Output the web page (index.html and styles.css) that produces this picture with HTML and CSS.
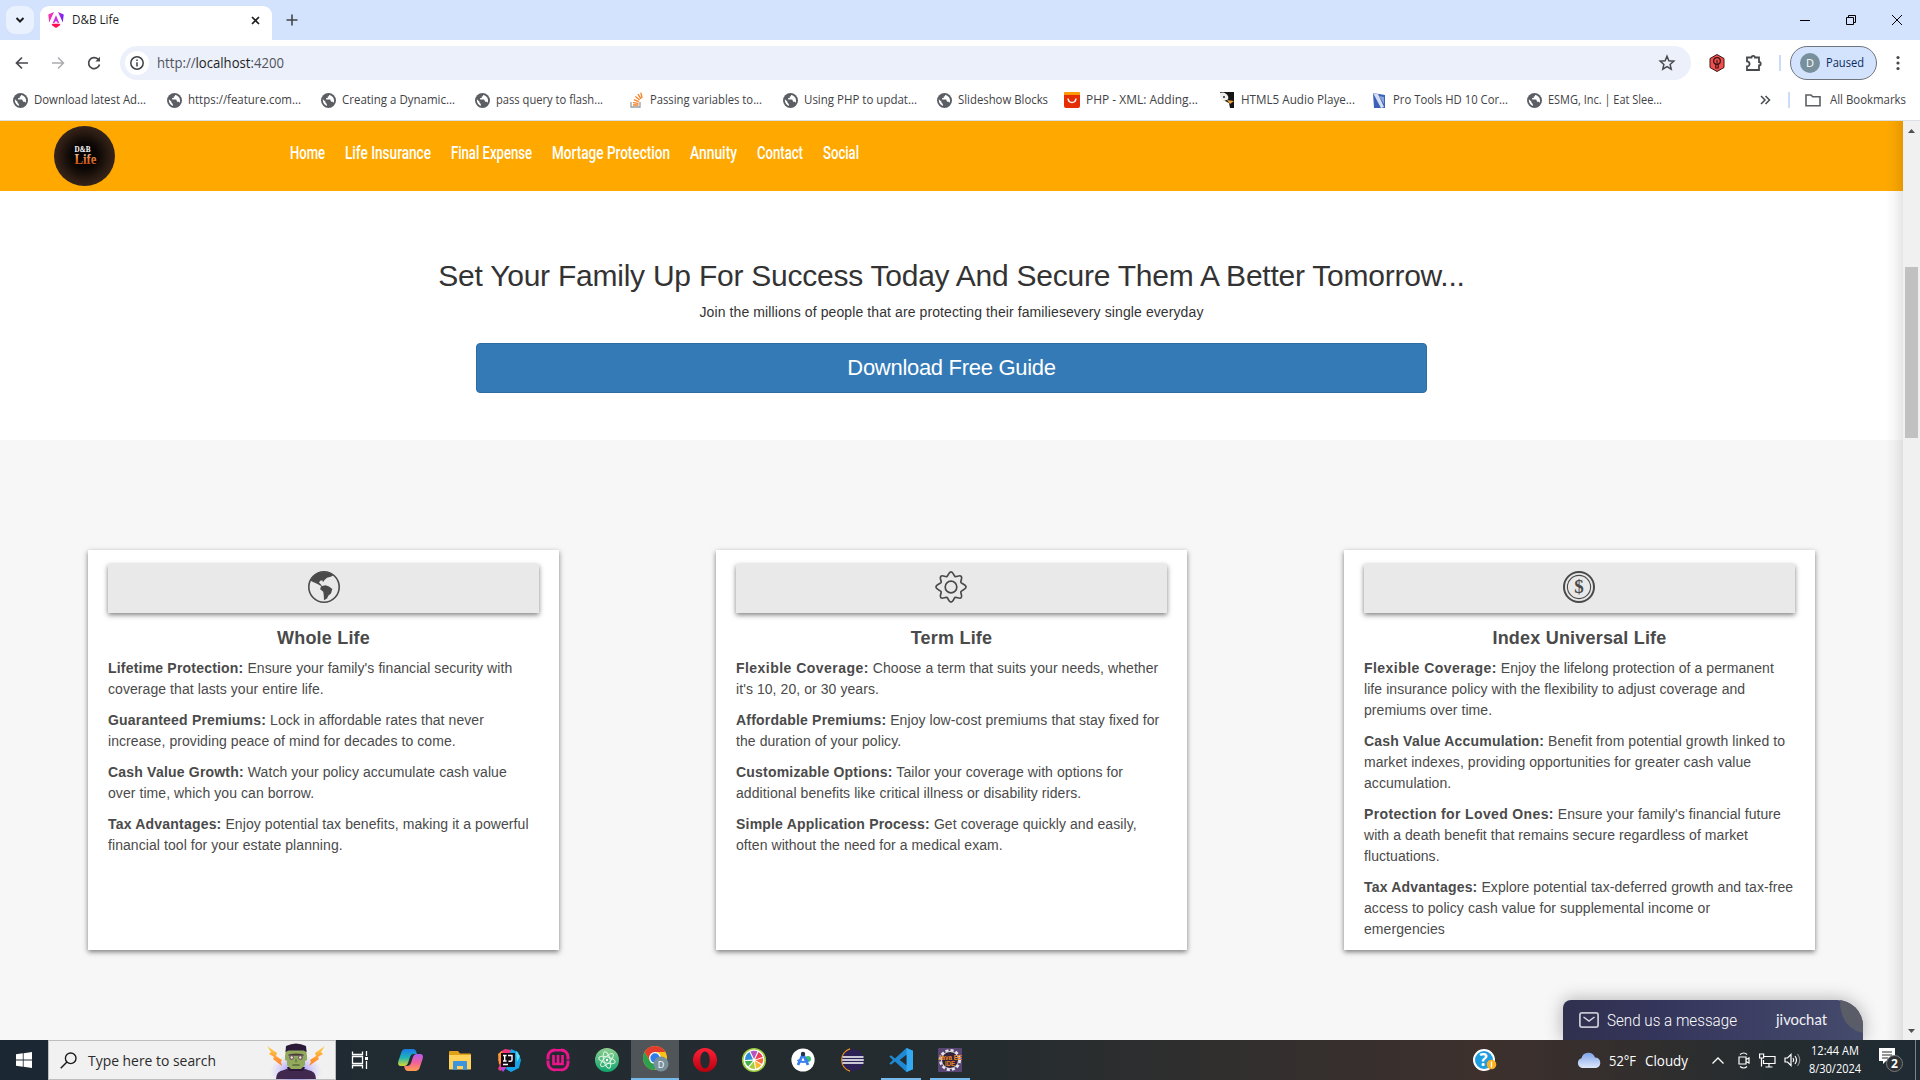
FILE: index.html
```html
<!DOCTYPE html>
<html lang="en">
<head>
<meta charset="utf-8">
<title>D&amp;B Life</title>
<link rel="stylesheet" href="styles.css">
</head>
<body>
<svg class="defs" width="0" height="0">
  <symbol id="globe" viewBox="0 0 16 16"><circle cx="8" cy="8" r="8" fill="#5b5f64"/><path d="M2 6.600 4.800 9.400v1l1.400 1.400v2C3.800 13 2 10.600 2 8zM8.500 2c.4 1.200-.6 1.500-1.300 1.800v1.500H5.500V7h4.300l1 2.300h1.700l1 1C15.200 6.500 12.500 2.500 8.500 2z" fill="#fff"/></symbol>
</svg>

<div class="tabstrip">
  <div class="tabsearch"><svg width="10" height="10" viewBox="0 0 10 10"><path d="M1.500 3 5 6.500 8.500 3" fill="none" stroke="#1f1f1f" stroke-width="2"/></svg></div>
  <div class="tab">
    <svg width="16" height="16" viewBox="0 0 16 16"><defs><linearGradient id="ng" x2="1"><stop offset="0" stop-color="#ff2fa0"/><stop offset=".55" stop-color="#d02be8"/><stop offset="1" stop-color="#6a22f0"/></linearGradient></defs><path d="M6 0 .3 2.400 1.200 10.500zM10 0l5.700 2.400-.9 8.100z" fill="url(#ng)"/><path d="M8 3.200 4.800 11h1.600l.6-1.600h2l.6 1.600h1.600z" fill="#d02be8"/><path d="M3.600 13 8 16l4.400-3-.8-1.200H4.400z" fill="#ff0f50"/></svg>
    <svg class="fit tabname" width="47" height="16"><text x="0" y="12" textLength="47" lengthAdjust="spacingAndGlyphs">D&amp;B Life</text></svg>
    <svg class="tabclose" width="9" height="9" viewBox="0 0 9 9"><path d="M1 1l7 7M8 1 1 8" stroke="#1f1f1f" stroke-width="1.700"/></svg>
  </div>
  <svg class="newtab" width="12" height="12" viewBox="0 0 12 12"><path d="M6 .5v11M.5 6h11" stroke="#444" stroke-width="1.600"/></svg>
  <div class="winctl">
    <span><svg width="10" height="10"><path d="M0 5.500h10" stroke="#000"/></svg></span>
    <span><svg width="10" height="10"><path d="M.5 2.500h7v7h-7zM2.500 2.500v-2h7v7h-2" fill="none" stroke="#000"/></svg></span>
    <span><svg width="10" height="10"><path d="M0 0l10 10M10 0 0 10" stroke="#000"/></svg></span>
  </div>
</div>

<div class="toolbar">
  <div class="tbtn"><svg width="14" height="14" viewBox="0 0 14 14"><path d="M13 7H2M7 1.500 1.500 7 7 12.500" fill="none" stroke="#47494d" stroke-width="1.700"/></svg></div>
  <div class="tbtn"><svg width="14" height="14" viewBox="0 0 14 14"><path d="M1 7h11M7 1.500 12.500 7 7 12.500" fill="none" stroke="#aaacaf" stroke-width="1.500"/></svg></div>
  <div class="tbtn"><svg width="14" height="14" viewBox="0 0 14 14"><path d="M12.500 8.500A5.500 5.500 0 1 1 11 3.200l1.300 1.300" fill="none" stroke="#47494d" stroke-width="1.700"/><path d="M13 .8V5.500H8.300z" fill="#47494d"/></svg></div>
  <div class="omnibox">
    <div class="info"><svg width="14" height="14" viewBox="0 0 14 14"><circle cx="7" cy="7" r="6.200" fill="none" stroke="#3c4043" stroke-width="1.500"/><path d="M7 6.200v4.300M7 3.500V5" stroke="#3c4043" stroke-width="1.500"/></svg></div>
    <svg class="fit url" width="130" height="20"><text x="0" y="15" textLength="127" lengthAdjust="spacingAndGlyphs"><tspan>http://</tspan><tspan class="host">localhost</tspan><tspan>:4200</tspan></text></svg>
    <svg class="star" width="16" height="16" viewBox="0 0 16 16"><path d="M8 1.300l1.900 4.500 4.900.4-3.700 3.200 1.100 4.800L8 11.600l-4.200 2.600 1.100-4.800L1.200 6.200l4.900-.4z" fill="none" stroke="#47494d" stroke-width="1.500"/></svg>
  </div>
  <div class="tbtn"><svg width="16" height="18" viewBox="0 0 16 18"><path d="M8 .5l7 4v9l-7 4-7-4v-9z" fill="#f24e4e" stroke="#3a1717"/><circle cx="8" cy="7" r="3.300" fill="none" stroke="#3a1717" stroke-width="1.300"/><path d="M6.800 10h2.400v4H6.800zM8 6v3" fill="none" stroke="#3a1717" stroke-width="1.200"/></svg></div>
  <div class="tbtn puzzle"><svg width="18" height="18" viewBox="0 0 18 18"><path d="M2 3.500h4.500a1.700 1.700 0 0 1 3.400 0H14V8a1.700 1.700 0 0 1 0 3.400V16H2v-3.500c3.400 0 3.400-5.200 0-5.200z" fill="none" stroke="#47494d" stroke-width="1.800"/></svg></div>
  <i class="sep"></i>
  <div class="profile"><b>D</b><svg class="fit" width="38" height="16"><text x="0" y="12" textLength="38" lengthAdjust="spacingAndGlyphs">Paused</text></svg></div>
  <div class="tbtn dots"><svg width="4" height="16"><circle cx="2" cy="2.500" r="1.600"/><circle cx="2" cy="8" r="1.600"/><circle cx="2" cy="13.500" r="1.600"/></svg></div>
</div>

<div class="bookmarks">
  <div class="bm"><svg width="15" height="15"><use href="#globe"/></svg><svg class="fit" width="112" height="16"><text x="0" y="12" textLength="112" lengthAdjust="spacingAndGlyphs">Download latest Ad...</text></svg></div>
  <div class="bm"><svg width="15" height="15"><use href="#globe"/></svg><svg class="fit" width="112" height="16"><text x="0" y="12" textLength="113" lengthAdjust="spacingAndGlyphs">https://feature.com...</text></svg></div>
  <div class="bm"><svg width="15" height="15"><use href="#globe"/></svg><svg class="fit" width="112" height="16"><text x="0" y="12" textLength="113" lengthAdjust="spacingAndGlyphs">Creating a Dynamic...</text></svg></div>
  <div class="bm"><svg width="15" height="15"><use href="#globe"/></svg><svg class="fit" width="112" height="16"><text x="0" y="12" textLength="107" lengthAdjust="spacingAndGlyphs">pass query to flash...</text></svg></div>
  <div class="bm"><svg width="15" height="16" viewBox="0 0 15 16"><path d="M2 10v5h9v-5" fill="none" stroke="#9a9da0" stroke-width="1.300"/><path d="M4 13h5.500M4 10.600l5.500.7M4.800 7.700l5 1.900M6.400 4.600l4.300 3.500M9 2.200l3 4.700M11.800.6l1.300 5.600" stroke="#f48024" stroke-width="1.300"/></svg><svg class="fit" width="112" height="16"><text x="0" y="12" textLength="112" lengthAdjust="spacingAndGlyphs">Passing variables to...</text></svg></div>
  <div class="bm"><svg width="15" height="15"><use href="#globe"/></svg><svg class="fit" width="112" height="16"><text x="0" y="12" textLength="113" lengthAdjust="spacingAndGlyphs">Using PHP to updat...</text></svg></div>
  <div class="bm"><svg width="15" height="15"><use href="#globe"/></svg><svg class="fit" width="90" height="16"><text x="0" y="12" textLength="90" lengthAdjust="spacingAndGlyphs">Slideshow Blocks</text></svg></div>
  <div class="bm tight"><svg width="16" height="16"><rect width="16" height="16" rx="2" fill="#e62e04"/><path d="M0 2q0-2 2-2h12q2 0 2 2v1H0z" fill="#ff9a00"/><path d="M4 6.500q.6 4 4 4t4-4" fill="none" stroke="#fff" stroke-width="1.500"/></svg><svg class="fit" width="112" height="16"><text x="0" y="12" textLength="112" lengthAdjust="spacingAndGlyphs">PHP - XML: Adding...</text></svg></div>
  <div class="bm"><svg width="16" height="16"><path d="M1 0h14v16h-4l-1-5-4-2-3-4z" fill="#151515"/><path d="M1 1q5-2 8 3 1 3-1 4L4 9 1 5z" fill="#eee"/><circle cx="5" cy="5" r="1" fill="#222"/><path d="M8 8l7 1-4 3z" fill="#f2a33a"/></svg><svg class="fit" width="114" height="16"><text x="0" y="12" textLength="114" lengthAdjust="spacingAndGlyphs">HTML5 Audio Playe...</text></svg></div>
  <div class="bm near"><svg width="15" height="16"><path d="M1 1l12 2v13H2z" fill="#3c62b8"/><path d="M1 1l5 1 6 13-3 1z" fill="#d5def4"/><path d="M7 4l5 1v7z" fill="#8ba3dc"/></svg><svg class="fit" width="115" height="16"><text x="0" y="12" textLength="115" lengthAdjust="spacingAndGlyphs">Pro Tools HD 10 Cor...</text></svg></div>
  <div class="bm last"><svg width="15" height="15"><use href="#globe"/></svg><svg class="fit" width="114" height="16"><text x="0" y="12" textLength="114" lengthAdjust="spacingAndGlyphs">ESMG, Inc. | Eat Slee...</text></svg></div>
  <div class="bmright">
    <svg width="10" height="10" viewBox="0 0 10 10"><path d="M1 1l4 4-4 4M5.500 1l4 4-4 4" fill="none" stroke="#47494d" stroke-width="1.500"/></svg>
    <i class="sep"></i>
    <svg width="16" height="13" viewBox="0 0 16 13"><path d="M1 11.800V1h5l1.700 1.800H15v9z" fill="none" stroke="#5b5f64" stroke-width="1.600"/></svg>
    <svg class="fit" width="76" height="16"><text x="0" y="12" textLength="76" lengthAdjust="spacingAndGlyphs">All Bookmarks</text></svg>
  </div>
</div>

<div class="viewport">
  <main class="page">
    <header class="sitenav">
      <svg class="logo" width="62" height="60" viewBox="0 0 62 60"><defs><radialGradient id="lg"><stop offset="0" stop-color="#000"/><stop offset=".45" stop-color="#0c0705"/><stop offset=".8" stop-color="#2a1b12"/><stop offset="1" stop-color="#35241a"/></radialGradient><linearGradient id="lt" x2="0" y2="1"><stop offset="0" stop-color="#f4e3cf"/><stop offset=".5" stop-color="#e8762a"/><stop offset="1" stop-color="#b33d10"/></linearGradient></defs><ellipse cx="30.500" cy="30" rx="30.500" ry="30" fill="url(#lg)"/><text x="20.500" y="26" class="logo1" textLength="16" lengthAdjust="spacingAndGlyphs">D&amp;B</text><text x="20.500" y="37.500" class="logo2" fill="url(#lt)" textLength="22" lengthAdjust="spacingAndGlyphs">Life</text></svg>
      <nav>
        <svg width="35" height="24"><text x="0" y="18" textLength="35" lengthAdjust="spacingAndGlyphs">Home</text></svg>
        <svg width="86" height="24"><text x="0" y="18" textLength="86" lengthAdjust="spacingAndGlyphs">Life Insurance</text></svg>
        <svg width="81" height="24"><text x="0" y="18" textLength="81" lengthAdjust="spacingAndGlyphs">Final Expense</text></svg>
        <svg width="118" height="24"><text x="0" y="18" textLength="118" lengthAdjust="spacingAndGlyphs">Mortage Protection</text></svg>
        <svg width="47" height="24"><text x="0" y="18" textLength="47" lengthAdjust="spacingAndGlyphs">Annuity</text></svg>
        <svg width="46" height="24"><text x="0" y="18" textLength="46" lengthAdjust="spacingAndGlyphs">Contact</text></svg>
        <svg width="36" height="24"><text x="0" y="18" textLength="36" lengthAdjust="spacingAndGlyphs">Social</text></svg>
      </nav>
    </header>
    <section class="hero">
      <h2>Set Your Family Up For Success Today And Secure Them A Better Tomorrow...</h2>
      <p>Join the millions of people that are protecting their familiesevery single everyday</p>
      <a class="btn">Download Free Guide</a>
    </section>
    <section class="plans">
      <article class="card">
        <div class="cardicon"><svg width="32" height="32" viewBox="0 0 32 32"><circle cx="16" cy="16" r="15.200" fill="none" stroke="#4a4a4a" stroke-width="1.600"/><path d="M2.500 9.500C5 4 10 1 16 1c4 0 7 1.200 9.500 3.200l-2.800 1.600-3.700 1-2.500 2.200-1.500 2.300-.5-1.800h-2l-1.500 2 1.500 1.500 1.500 1.800h-1.500L9.500 13 4 10.500z" fill="#4a4a4a"/><path d="M13 15.200l4.500-.9 3.500 1.200 3.300 2.500-1.300 4.500-2.500 2-1.500 3-3 1.700-.3-5.500-.5-3-3-2.500z" fill="#4a4a4a"/></svg></div>
        <h3>Whole Life</h3>
        <p><b>Lifetime Protection:</b> Ensure your family's financial security with<br>coverage that lasts your entire life.</p>
        <p><b>Guaranteed Premiums:</b> Lock in affordable rates that never<br>increase, providing peace of mind for decades to come.</p>
        <p><b>Cash Value Growth:</b> Watch your policy accumulate cash value<br>over time, which you can borrow.</p>
        <p><b>Tax Advantages:</b> Enjoy potential tax benefits, making it a powerful<br>financial tool for your estate planning.</p>
      </article>
      <article class="card">
        <div class="cardicon"><svg width="32" height="32" viewBox="0 0 32 32" fill="none" stroke="#4a4a4a" stroke-width="1.700"><circle cx="16" cy="16" r="5.800"/><path d="M16 .9c2.300 0 2.600 4 4.200 4.700 1.600.6 4.300-2 6-.3s-.9 4.400-.3 6c.7 1.600 5.200 2.400 5.200 4.700s-4.500 3.100-5.200 4.700c-.6 1.600 2 4.300.3 6s-4.400-.9-6-.3c-1.600.7-1.900 4.700-4.200 4.700s-2.600-4-4.200-4.700c-1.600-.6-4.300 2-6 .3s.9-4.400.3-6C5.400 19.100.9 18.300.9 16s4.500-3.100 5.200-4.700c.6-1.600-2-4.300-.3-6s4.400.9 6 .3C13.400 4.900 13.700.9 16 .9z"/></svg></div>
        <h3>Term Life</h3>
        <p><b class="wide">Flexible Coverage:</b> Choose a term that suits your needs, whether<br>it's 10, 20, or 30 years.</p>
        <p><b>Affordable Premiums:</b> Enjoy low-cost premiums that stay fixed for<br>the duration of your policy.</p>
        <p><b>Customizable Options:</b> Tailor your coverage with options for<br>additional benefits like critical illness or disability riders.</p>
        <p><b>Simple Application Process:</b> Get coverage quickly and easily,<br>often without the need for a medical exam.</p>
      </article>
      <article class="card">
        <div class="cardicon"><svg width="32" height="32" viewBox="0 0 32 32"><circle cx="16" cy="16" r="15" fill="none" stroke="#4a4a4a" stroke-width="2"/><circle cx="16" cy="16" r="11.600" fill="none" stroke="#4a4a4a" stroke-width="1.100"/><text x="16" y="22" text-anchor="middle" class="dollar">$</text></svg></div>
        <h3>Index Universal Life</h3>
        <p><b class="wide">Flexible Coverage:</b> Enjoy the lifelong protection of a permanent<br>life insurance policy with the flexibility to adjust coverage and<br>premiums over time.</p>
        <p><b>Cash Value Accumulation:</b> Benefit from potential growth linked to<br>market indexes, providing opportunities for greater cash value<br>accumulation.</p>
        <p><b class="mid">Protection for Loved Ones:</b> Ensure your family's financial future<br>with a death benefit that remains secure regardless of market<br>fluctuations.</p>
        <p><b>Tax Advantages:</b> Explore potential tax-deferred growth and tax-free<br>access to policy cash value for supplemental income or<br>emergencies</p>
      </article>
    </section>
    <div class="edgeshade"></div>
    <div class="chat">
      <svg width="20" height="16" viewBox="0 0 20 16"><rect x=".9" y=".9" width="18.200" height="14.200" rx="2" fill="none" stroke="#c3c6cc" stroke-width="1.800"/><path d="M4.500 5l5.500 4 5.500-4" fill="none" stroke="#d5d8dc" stroke-width="1.500"/></svg>
      <svg class="send" width="131" height="24"><text x="0" y="17.500" textLength="130" lengthAdjust="spacingAndGlyphs">Send us a message</text></svg>
      <svg class="jivo" width="52" height="24"><text x="0" y="16.500" textLength="51" lengthAdjust="spacingAndGlyphs">jivochat</text></svg>
      <svg class="leaf" width="23" height="33"><path d="M0 0h23v33Q0 28 0 0z" fill="#5a5c68"/></svg>
    </div>
  </main>
  <div class="scrollbar">
    <svg width="7" height="4"><path d="M0 4 3.500 0 7 4z" fill="#505050"/></svg>
    <div class="thumb"></div>
    <svg class="down" width="7" height="4"><path d="M0 0 3.500 4 7 0z" fill="#505050"/></svg>
  </div>
</div>

<footer class="taskbar">
  <div class="start"><svg width="16" height="16"><path d="M0 2.300 6.800 1.300v6.300H0zM7.600 1.200 16 0v7.600H7.600zM0 8.400h6.800v6.300L0 13.700zM7.600 8.400H16V16l-8.400-1.200z" fill="#fff"/></svg></div>
  <div class="search">
    <svg width="17" height="17" viewBox="0 0 17 17"><circle cx="10.700" cy="6.300" r="5.300" fill="none" stroke="#1d1d1d" stroke-width="1.400"/><path d="M7 10 .7 16.300" stroke="#1d1d1d" stroke-width="1.500"/></svg>
    <svg class="fit query" width="130" height="22"><text x="0" y="17" textLength="128" lengthAdjust="spacingAndGlyphs">Type here to search</text></svg>
    <svg class="frank" width="60" height="36" viewBox="0 0 60 36"><defs><linearGradient id="bolt" x2="0" y2="1"><stop offset="0" stop-color="#ffd24a"/><stop offset="1" stop-color="#ff7a2a"/></linearGradient><radialGradient id="glow"><stop offset=".4" stop-color="#9a8cff" stop-opacity=".6"/><stop offset="1" stop-color="#b8b0ff" stop-opacity="0"/></radialGradient></defs><ellipse cx="30" cy="28" rx="26" ry="17" fill="url(#glow)"/><path d="M1 3l10 7-1 3 6 4-1 2 1 4-9-7 1-2-5-3 2-2zM59 3 49 10l1 3-6 4 1 2-2 4 10-7-1-2 5-3-2-2z" fill="url(#bolt)"/><path d="M10 36q0-8 8-9l7-3h9l8 3q8 1 8 9z" fill="#41284f"/><path d="M21 24h18l-2 4H23z" fill="#2b1839"/><path d="M20 6q10-5 20 0l1 7v4l-2 1v4l-4 4H25l-4-4v-4l-2-1v-4z" fill="#93aa5c"/><path d="M19.500 9 20 3q10-5 20 0l.6 6-3-1.500H22.500z" fill="#2c1b38"/><path d="M22.500 11.500q7.500-2 15 0v1.200h-15z" fill="#4a4038"/><circle cx="25.500" cy="14.500" r="2.400" fill="#6d5575"/><circle cx="34.500" cy="14.500" r="2.400" fill="#6d5575"/><circle cx="25.700" cy="14.500" r="1.200" fill="#f2e9c9"/><circle cx="34.300" cy="14.500" r="1.200" fill="#f2e9c9"/><path d="M30 14l-1.500 5h3z" fill="#6a8a45"/><path d="M26.500 22h7" stroke="#4a5a30" stroke-width="1.200"/></svg>
  </div>
  <div class="app view"><svg width="18" height="18" fill="none" stroke="#fff" stroke-width="1.300"><path d="M1.500.5v3h10v-3M1.500 17.500v-3h10v3M1.500 5.500h10v7h-10zM15.500 0v5M15.500 10v8"/><rect x="14" y="6" width="3" height="3" fill="#fff" stroke="none"/></svg></div>
  <div class="app"><svg width="25" height="22" viewBox="0 0 25 22"><defs><linearGradient id="c1" x2="0" y2="1"><stop offset="0" stop-color="#1c78e8"/><stop offset=".5" stop-color="#1db3b8"/><stop offset="1" stop-color="#d8d92f"/></linearGradient><linearGradient id="c2" x2="0" y2="1"><stop offset="0" stop-color="#b45cf0"/><stop offset=".5" stop-color="#f0609a"/><stop offset="1" stop-color="#ffa04a"/></linearGradient></defs><path d="M7 0h8q3 0 3.600 4l.4 1h-4q-2 0-3 3l-2 6q-1 3-4 3H3q-4 0-2.600-5l3-9Q4.500 0 7 0z" fill="url(#c1)"/><path d="M18 22h-8q-3 0-3.600-4L6 17h3q3 0 4-3l2-6q1-3 4-3h3q4 0 2.600 5l-3 9Q20.500 22 18 22z" fill="url(#c2)"/></svg></div>
  <div class="app"><svg width="22" height="19" viewBox="0 0 22 19"><path d="M0 1q0-1 1-1h8l2 2.500h10q1 0 1 1V18H0z" fill="#e0a11b"/><path d="M0 4h22v14q0 .5-1 .5H1q-1 0-1-.5z" fill="#ffd25c"/><path d="M4 19v-8q0-1 1-1h12q1 0 1 1v8h-4v-4H8v4z" fill="#3d94dc"/></svg></div>
  <div class="app"><svg width="24" height="24" viewBox="0 0 24 24"><path d="M3 4 8 1l6 1 2 3L9 20l-6 3-2-2 2-5-2-4z" fill="#f0387c"/><path d="M1 6l4-3 2 8-5 6z" fill="#ff9b2e"/><path d="M14 1l7 3 3 8-2 8-8 4-5-3z" fill="#14a5e8"/><path d="M19 3l4 5-3 6z" fill="#5de0f5"/><path d="M3 19l6 1-3 4z" fill="#a64be8"/><path d="M4 5h14v14H4z" fill="#140c14"/><path d="M6 7.500h3.500M6 13h3.500M7.700 7.500V13M11 7.500h4V12q0 1.200-1.500 1.200h-2M6 16.500h5" stroke="#fff" stroke-width="1.400" fill="none"/></svg></div>
  <div class="app"><svg width="24" height="24" viewBox="0 0 24 24"><rect x="2" y="2" width="20" height="20" rx="7" fill="none" stroke="#ea148c" stroke-width="3"/><path d="M0 12h4M20 12h4M9 .5h6M9 23.500h6" stroke="#222b31" stroke-width="1"/><path d="M7.500 7v9h9V7M12 7v8" fill="none" stroke="#ea148c" stroke-width="2.700"/></svg></div>
  <div class="app"><svg width="24" height="24" viewBox="0 0 24 24"><defs><linearGradient id="at" x2="0" y2="1"><stop offset="0" stop-color="#8fcf8f"/><stop offset="1" stop-color="#0fa56c"/></linearGradient></defs><circle cx="12" cy="12" r="12" fill="url(#at)"/><g fill="none" stroke="#dff5e6" stroke-width="1"><ellipse cx="12" cy="12" rx="8.500" ry="3.200" transform="rotate(15 12 12)"/><ellipse cx="12" cy="12" rx="8.500" ry="3.200" transform="rotate(75 12 12)"/><ellipse cx="12" cy="12" rx="8.500" ry="3.200" transform="rotate(135 12 12)"/></g><circle cx="12" cy="12" r="1.200" fill="#fff"/></svg></div>
  <div class="app active"><svg width="26" height="26" viewBox="0 0 26 26"><circle cx="12" cy="12" r="12" fill="#fbc116"/><path d="M12 6h10.400A12 12 0 0 0 1.600 6l5.200 9z" fill="#e33b2e"/><path d="M1.600 6A12 12 0 0 0 12 24l5.200-9H6.800z" fill="#2da04e"/><circle cx="12" cy="12" r="6" fill="#fff"/><circle cx="12" cy="12" r="4.700" fill="#2f7de9"/><circle cx="18" cy="18" r="7.500" fill="#78909c"/><text x="18" y="21.500" text-anchor="middle" class="cd">D</text></svg></div>
  <div class="app"><svg width="24" height="24" viewBox="0 0 24 24"><defs><linearGradient id="op" x2="0" y2="1"><stop offset="0" stop-color="#ff2136"/><stop offset="1" stop-color="#b8000f"/></linearGradient></defs><path fill-rule="evenodd" d="M12 0a12 12 0 1 0 0 24 12 12 0 1 0 0-24zm0 3.500c3 0 4.700 4 4.700 8.500s-1.700 8.500-4.700 8.500S7.300 16.500 7.300 12 9 3.500 12 3.500z" fill="url(#op)"/></svg></div>
  <div class="app"><svg width="24" height="24" viewBox="0 0 24 24"><circle cx="12" cy="12" r="11.300" fill="#fff" stroke="#9ccc3c" stroke-width="1.600"/><g><path d="M12 11 8.500 3.500a9 9 0 0 1 7 0z" fill="#b455c0"/><path d="M13 11.500 16.500 4a9 9 0 0 1 4.300 5z" fill="#ef3e5c"/><path d="M13.500 12.300 21 10a9 9 0 0 1-1 6z" fill="#f7693b"/><path d="M13 13l6.500 4a9 9 0 0 1-5.500 3.800z" fill="#fbb62b"/><path d="M12 13.500l1 7.500a9 9 0 0 1-6-1.700z" fill="#a4ce39"/><path d="M11 12.800l-4.800 5.700A9 9 0 0 1 3 13z" fill="#40b04a"/><path d="M11 11.500 3 12a9 9 0 0 1 4.500-8z" fill="#2c8fd8"/></g></svg></div>
  <div class="app"><svg width="24" height="24" viewBox="0 0 24 24"><circle cx="12" cy="12" r="11.600" fill="#fff"/><circle cx="17" cy="11" r="3" fill="#3ac26b"/><path d="M12 6 7 17M12 6l5 11" stroke="#3a7ff0" stroke-width="2.800"/><path d="M6.500 12q5.500 4 11 0" fill="none" stroke="#3a7ff0" stroke-width="2"/><circle cx="12" cy="6" r="2.200" fill="#20354f"/></svg></div>
  <div class="app"><svg width="25" height="24" viewBox="0 0 25 24"><path d="M11 1A11.500 11.500 0 0 0 11 23 12.500 12.500 0 0 1 11 1z" fill="#f7941e" stroke="#f7941e" stroke-width="1.500"/><circle cx="14" cy="12" r="10.800" fill="#2c2255"/><path d="M3.500 9h21M3.200 12h21.600M3.500 15h21" stroke="#fff" stroke-width="1.600"/></svg></div>
  <div class="app running"><svg width="24" height="24" viewBox="0 0 24 24"><path d="M17.500 0 24 2.700v18.600L17.500 24 6 13.500 2 16.800.3 15.500 4 12 .3 8.500 2 7.200 6 10.500z" fill="#1f8ad2"/><path d="M17.500 0 24 2.700v18.600L17.500 24z" fill="#32a9f0"/><path d="M17.500 6.800v10.400L10.700 12z" fill="#232c30"/></svg></div>
  <div class="app running"><svg width="24" height="24" viewBox="0 0 24 24"><rect width="24" height="24" rx="1" fill="#5a4675"/><circle cx="12" cy="12" r="9.500" fill="none" stroke="#e8e4ea" stroke-width="3" stroke-dasharray="3 2"/><circle cx="12" cy="12" r="8.500" fill="#30233a" stroke="#ddd"/><text x="0" y="11.500" class="jee" textLength="24" lengthAdjust="spacingAndGlyphs">Java EE</text><text x="7" y="18" class="jee" textLength="10" lengthAdjust="spacingAndGlyphs">IDE</text></svg></div>
  <div class="tray">
    <svg class="help" width="24" height="22" viewBox="0 0 24 22"><circle cx="11" cy="11" r="10" fill="#1e9de0" stroke="#fff" stroke-width="2"/><text x="10.500" y="17" text-anchor="middle" class="qm">?</text><circle cx="18.500" cy="15.500" r="4.800" fill="#f9b122"/><path d="M18.500 12.500v6" stroke="#fff" stroke-width="1.300"/></svg>
    <svg class="cloud" width="24" height="16" viewBox="0 0 24 16"><defs><linearGradient id="cl" x2="0" y2="1"><stop offset="0" stop-color="#7ea2ea"/><stop offset="1" stop-color="#dfe9fb"/></linearGradient></defs><path d="M5 16a5 5 0 0 1-.5-9.700A7 7 0 0 1 18 5.500 5.300 5.300 0 0 1 19 16z" fill="url(#cl)"/></svg>
    <svg class="wtext w1" width="27" height="20"><text x="0" y="15.500" textLength="27" lengthAdjust="spacingAndGlyphs">52°F</text></svg>
    <svg class="wtext w2" width="44" height="20"><text x="0" y="15.500" textLength="43" lengthAdjust="spacingAndGlyphs">Cloudy</text></svg>
    <svg class="chev" width="12" height="7"><path d="M.5 6.500 6 1l5.500 5.500" fill="none" stroke="#fff" stroke-width="1.300"/></svg>
    <svg class="ti" width="12" height="17" viewBox="0 0 12 17" fill="none" stroke="#fff" stroke-width="1.200"><path d="M2 2.500q4-3 7 0M2 14.500q4 3 7 0M1 5h7v7H1zM8 7.500l3-1.500v5L8 9.500"/></svg>
    <svg class="ti net" width="17" height="15" viewBox="0 0 17 15" fill="none" stroke="#fff" stroke-width="1.200"><path d="M5 3.500h11v7H4.500V7M10 10.500v3M6.500 14h7M.6 1h4v4h-4zM2.500 5v8.500"/></svg>
    <svg class="ti" width="17" height="14" viewBox="0 0 17 14" fill="none" stroke="#fff" stroke-width="1.200"><path d="M1 5h2.500L7 1.500v11L3.500 9H1zM9 5q1.500 2 0 4"/><path d="M11 3q3 4 0 8" /><path d="M13.500 1q4.500 6 0 12" stroke="#8a8a8a"/></svg>
    <div class="clock">
      <svg width="50" height="18"><text x="1" y="13" textLength="48" lengthAdjust="spacingAndGlyphs">12:44 AM</text></svg>
      <svg width="54" height="18"><text x="1" y="13" textLength="52" lengthAdjust="spacingAndGlyphs">8/30/2024</text></svg>
    </div>
    <svg class="note" width="26" height="26" viewBox="0 0 26 26"><path d="M1 1h16v13H8l-3 3v-3H1z" fill="#fff"/><path d="M4 5h10M4 8h10M4 11h6" stroke="#2a2a2a" stroke-width="1.200"/><circle cx="16.500" cy="16.500" r="8" fill="#2e3133" stroke="#7b7b7b"/><text x="16.500" y="21" text-anchor="middle" class="n2">2</text></svg>
    <i class="peek"></i>
  </div>
</footer>
</body>
</html>
```
FILE: styles.css
```css
* { box-sizing: border-box; }
body { margin: 0; width: 1920px; height: 1080px; overflow: hidden; display: flex; flex-direction: column; background: #fff; font-family: "Liberation Sans", Arial, sans-serif; }
svg { display: block; flex: none; overflow: visible; }
.defs { position: absolute; }
.fit text { font: 12px "Open Sans", "Noto Sans", sans-serif; fill: #3f4246; }

/* browser frame */
.tabstrip { height: 40px; flex: none; background: #d3e3fd; display: flex; align-items: flex-start; padding: 6px 0 0 6px; }
.tabsearch { width: 28px; height: 28px; border-radius: 9px; background: #e9f0fe; display: flex; align-items: center; justify-content: center; }
.tab { width: 232px; height: 34px; margin-left: 6px; background: #fff; border-radius: 9px 9px 0 0; display: flex; align-items: center; padding: 0 12px 6px 8px; }
.tabname { margin-left: 8px; }
.fit.tabname text { fill: #1f1f1f; }
.tabclose { margin-left: auto; }
.newtab { margin: 8px 0 0 14px; }
.winctl { margin-left: auto; display: flex; height: 28px; }
.winctl span { width: 46px; display: flex; align-items: center; justify-content: center; }
.toolbar { height: 46px; flex: none; padding: 6px 0 6px 4px; display: flex; align-items: center; }
.tbtn { width: 36px; height: 34px; display: flex; align-items: center; justify-content: center; }
.tbtn.puzzle { padding-left: 2px; }
.omnibox { width: 1571px; height: 34px; margin: 0 8px; border-radius: 17px; background: #ecf0fa; display: flex; align-items: center; padding: 0 16px 0 5px; }
.info { width: 24px; height: 24px; border-radius: 50%; background: #fff; display: flex; align-items: center; justify-content: center; }
.url { margin-left: 8px; }
.fit.url text { font-size: 14px; fill: #50545a; }
.fit.url .host { fill: #1f1f1f; }
.star { margin-left: auto; }
.sep { width: 2px; height: 16px; background: #c9dcfb; margin-left: 8px; }
.profile { width: 87px; height: 34px; margin-left: 9px; border: 1px solid #6f757c; border-radius: 17px; background: #d3e3fd; display: flex; align-items: center; padding-left: 9px; gap: 6px; }
.profile b { width: 20px; height: 20px; border-radius: 50%; background: #78909c; color: #fff; font: 11px/20px "Open Sans", sans-serif; text-align: center; }
.profile .fit text { fill: #0a2a5e; }
.dots { margin-left: 3px; fill: #47494d; }
.bookmarks { height: 35px; flex: none; border-bottom: 1px solid #dcdfe4; padding: 0 0 6px 13px; display: flex; align-items: center; gap: 21px; }
.bm { display: flex; align-items: center; gap: 6px; }
.bm.tight { margin-left: -5px; }
.bm.near { margin-left: -4px; }
.bm.last { margin-left: -2px; }
.bmright { margin-left: auto; display: flex; align-items: center; padding-right: 14px; }
.bmright .sep { margin: 0 15px 0 18px; }
.bmright .fit { margin-left: 9px; }

/* site */
.viewport { height: 919px; flex: none; display: flex; }
.page { width: 1903px; position: relative; overflow: hidden; }
.sitenav { height: 70px; background: #ffa900; display: flex; padding: 5px 0 0 54px; }
nav { display: flex; gap: 20px; margin: 15px 0 0 174px; }
nav text { font: 500 18px Roboto, "Open Sans", sans-serif; fill: #fff; }
.logo1 { font: bold 7.500px "Liberation Serif", serif; fill: #fff; }
.logo2 { font: bold 14px "Liberation Serif", serif; }
.hero { height: 249px; padding: 68px 0 0; color: #333; display: flex; flex-direction: column; align-items: center; }
.hero h2 { margin: 0; font-size: 30px; font-weight: 400; line-height: 33px; letter-spacing: -.24px; white-space: nowrap; }
.hero p { margin: 10px 0 21px; font-size: 14px; line-height: 20px; letter-spacing: .1px; }
.btn { width: 951px; height: 50px; background: #337ab7; border: 1px solid #2e6da4; border-radius: 4px; color: #fff; font-size: 22px; line-height: 48px; text-align: center; letter-spacing: -.3px; }
.plans { height: 600px; background: #f7f7f7; padding: 110px 88px 0; display: flex; justify-content: space-between; }
.card { width: 471px; height: 400px; background: #fff; padding: 14px 20px 0; box-shadow: 0 2px 5px rgba(0,0,0,.5); color: #4a4a4a; font-size: 14px; line-height: 21px; }
.cardicon { height: 49px; background: #e9e9e9; box-shadow: 0 2px 5px rgba(0,0,0,.5); display: flex; justify-content: center; padding-top: 7px; }
.card + .card .cardicon { padding-right: 2px; }
.card h3 { margin: 15px 0 10px; font-size: 18px; line-height: 20px; text-align: center; letter-spacing: .2px; }
.card p { margin: 0 0 10px; letter-spacing: .07px; white-space: nowrap; }
.card b { letter-spacing: .2px; }
.card b.wide { letter-spacing: .46px; }
.card b.mid { letter-spacing: .36px; }
.dollar { font: bold 19px "Liberation Serif", serif; fill: #4a4a4a; }
.edgeshade { position: absolute; top: 0; right: 0; width: 18px; height: 919px; background: linear-gradient(90deg, rgba(0,0,0,0), rgba(0,0,0,.03) 50%, rgba(0,0,0,.1)); }
.chat { position: absolute; left: 1563px; bottom: 0; width: 300px; height: 40px; border-radius: 8px 26px 0 0; background: linear-gradient(90deg, #30314f, #34355a 30%, #454b6d); box-shadow: 0 0 18px rgba(0,0,0,.3); display: flex; align-items: center; padding-left: 16px; overflow: hidden; }
.send { margin-left: 8px; }
.send text { font: 300 16px Roboto, sans-serif; fill: #fff; }
.jivo { margin-left: 38px; }
.jivo text { font: 15px Lato, sans-serif; fill: #f1f2f5; }
.leaf { margin: 0 0 7px auto; }
.scrollbar { width: 17px; background: #f0f0f0; padding-top: 8px; display: flex; flex-direction: column; align-items: center; }
.thumb { width: 13px; height: 171px; margin-top: 134px; background: #c1c1c1; }
.down { margin: auto 0 7px; }

/* taskbar */
.taskbar { height: 40px; flex: none; display: flex; align-items: stretch; color: #fff; background: linear-gradient(90deg, #1b2833 0, #222b31 25%, #252c2f 52%, #322f2e 65%, #3d302d 77%, #362f2d 83%, #252c2f 92%, #1f2b33 100%); }
.start { width: 48px; display: flex; align-items: center; justify-content: center; }
.search { width: 288px; background: #f1f1f1; border: 1px solid #bdbdbd; display: flex; align-items: center; padding-left: 11px; }
.query { margin-left: 11px; }
.fit.query text { font-size: 15px; fill: #2b2b2b; }
.frank { margin: 2px 9px 0 auto; }
.app { width: 49px; height: 40px; display: flex; align-items: center; justify-content: center; }
.app.view { width: 48px; margin-right: 2px; }
.app.active { width: 48px; margin-right: 1px; padding-left: 1px; background: #4f5559; border-bottom: 2px solid #76b9ed; }
.app.running { background: linear-gradient(#76b9ed, #76b9ed) center bottom / 40px 2px no-repeat; }
.cd { font: 9px "Open Sans", sans-serif; fill: #fff; }
.jee { font: bold 8px "Liberation Sans", sans-serif; fill: #f08a24; }
.tray { margin-left: auto; display: flex; align-items: center; }
.qm { font: bold 17px "Open Sans", sans-serif; fill: #fff; }
.cloud { margin-left: 80px; }
.w1 { margin-left: 8px; }
.w2 { margin-left: 9px; }
.wtext text { font: 14.500px "Open Sans", sans-serif; fill: #fff; }
.chev { margin: 0 6px 0 23px; }
.ti { margin-left: 8px; }
.ti.net { margin-left: 9px; }
.clock { width: 54px; margin-left: 7px; display: flex; flex-direction: column; align-items: center; }
.clock text { font: 12px "Open Sans", sans-serif; fill: #fff; }
.note { margin-left: 16px; }
.n2 { font: bold 12px "Open Sans", sans-serif; fill: #fff; }
.peek { width: 1px; height: 40px; background: #7c8387; margin: 0 4px 0 11px; }
```
